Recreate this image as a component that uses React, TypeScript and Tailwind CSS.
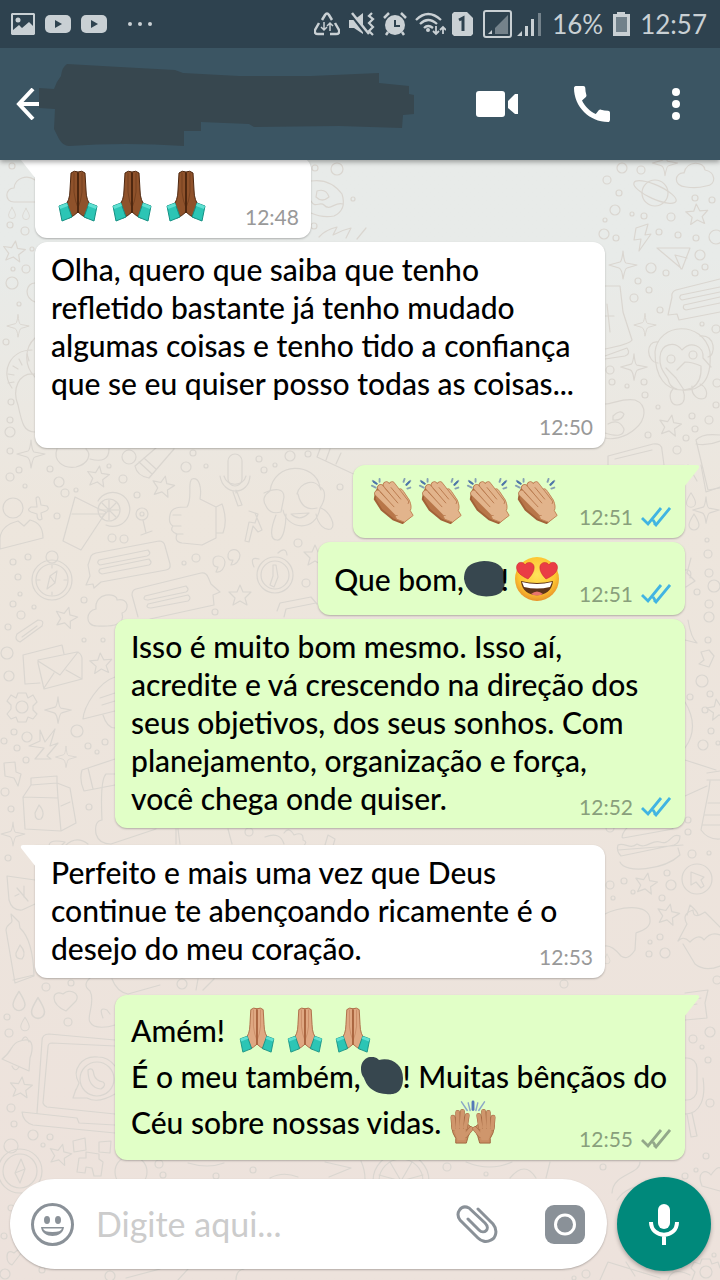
import type { ReactNode } from 'react'

type Spot = [number, number, number]

const circles: Spot[] = [
  // top left
  [12, 166, 3], [10, 225, 3], [25, 231, 4], [32, 249, 2], [13, 269, 2], [26, 269, 4], [12, 283, 6], [19, 304, 2],
  [6, 342, 3], [11, 402, 3], [10, 420, 3], [10, 432, 5], [10, 451, 3], [19, 470, 3], [10, 477, 4], [50, 469, 3],
  [59, 482, 5], [25, 486, 2], [129, 457, 7], [109, 466, 2], [123, 479, 4], [193, 453, 3], [186, 467, 5],
  [206, 466, 2], [259, 459, 3], [264, 470, 3], [275, 465, 2], [290, 456, 5], [308, 454, 3], [340, 487, 3],
  // left column
  [65, 493, 4], [76, 490, 2], [137, 495, 3], [57, 516, 3], [112, 538, 4], [124, 539, 4], [298, 543, 4],
  [13, 562, 3], [28, 557, 3], [18, 577, 3], [20, 594, 2], [184, 563, 2], [196, 558, 4], [306, 583, 4],
  [13, 604, 3], [34, 607, 2], [21, 615, 4], [84, 600, 3], [8, 627, 3], [84, 640, 2], [103, 640, 2], [215, 612, 3],
  [7, 653, 6], [9, 676, 5], [77, 731, 6], [14, 732, 3], [27, 737, 5], [4, 741, 3], [17, 748, 3], [88, 746, 3],
  [105, 742, 3], [26, 760, 3], [97, 752, 2], [5, 792, 4], [11, 809, 3], [89, 807, 3], [249, 832, 4],
  [8, 858, 3], [46, 987, 4], [71, 983, 3], [182, 984, 5], [7, 1017, 3], [9, 1033, 4], [68, 1022, 4],
  [11, 1108, 4], [14, 1124, 3], [33, 1135, 5], [50, 1137, 3], [43, 1145, 2], [159, 1164, 4], [163, 1175, 3],
  [216, 1176, 3], [253, 1170, 3], [11, 1208, 3], [4, 1236, 3], [5, 1274, 5], [42, 1270, 3], [110, 1276, 5],
  // top right
  [315, 168, 3], [337, 169, 6], [353, 199, 2], [314, 226, 3], [622, 168, 5], [641, 170, 4], [607, 180, 4],
  [619, 193, 3], [615, 210, 5], [632, 214, 2], [644, 216, 3], [671, 217, 4], [695, 198, 3], [712, 200, 3],
  [605, 220, 2], [604, 234, 5], [616, 238, 3], [659, 232, 3], [678, 235, 3], [696, 238, 3], [716, 237, 7],
  [651, 268, 5], [666, 273, 3], [700, 255, 5], [695, 273, 3], [705, 267, 3], [638, 281, 3], [649, 290, 3],
  [634, 298, 4], [660, 310, 3], [702, 324, 2], [716, 329, 4], [610, 370, 4], [612, 382, 3], [627, 386, 2],
  [644, 382, 3], [645, 395, 3], [658, 407, 2], [717, 383, 4], [716, 405, 3], [692, 416, 3], [709, 420, 4],
  [695, 429, 3], [648, 435, 3], [686, 438, 3], [677, 450, 4],
  // right column
  [707, 540, 2], [708, 554, 4], [709, 573, 4], [697, 592, 3], [714, 586, 6], [709, 604, 4], [709, 617, 5],
  [708, 640, 3], [702, 681, 6], [710, 694, 3], [690, 697, 3], [705, 710, 3], [711, 731, 3], [703, 745, 5],
  [718, 743, 2], [612, 819, 3], [610, 828, 4], [688, 820, 3], [688, 832, 3], [692, 854, 4], [709, 853, 2],
  [667, 873, 3], [671, 885, 5], [624, 881, 3], [613, 898, 2], [633, 892, 2], [662, 898, 3], [610, 885, 4],
  [660, 937, 3], [650, 942, 2], [649, 954, 3], [665, 953, 5], [590, 955, 5], [557, 955, 4], [717, 980, 4],
  [710, 1032, 5], [693, 1039, 4], [702, 1047, 2], [708, 1060, 3], [710, 1103, 4], [447, 1167, 4],
  [486, 1174, 2], [603, 1167, 3], [706, 1156, 3], [685, 1176, 3], [696, 1170, 2], [714, 1255, 2],
  [564, 984, 4], [586, 1274, 4], [574, 1278, 2],
]

// x, y, rotation
const stars: Spot[] = [
  [14, 252, 8], [98, 477, 8], [163, 487, 12], [697, 215, -4], [670, 426, 10], [240, 596, 0], [66, 618, 15],
  [101, 664, -4], [21, 1088, 6], [60, 1155, 14], [646, 884, 10], [668, 915, 12], [315, 556, 0], [718, 710, -10],
]

// x, y, scale in percent
const sparkles: Spot[] = [
  [18, 326, 80], [31, 454, 100], [58, 710, 95], [66, 757, 75], [13, 834, 85], [623, 265, 100],
  [645, 325, 80], [634, 367, 95], [665, 163, 90], [706, 510, 95],
]

// x, y, scale in percent
const drops: Spot[] = [
  [12, 213, 70], [26, 214, 70], [19, 1001, 120], [38, 1008, 130], [25, 1024, 85], [691, 500, 90],
  [694, 522, 100], [607, 959, 60],
]

function Doodles() {
  return (
    <svg
      aria-hidden="true"
      viewBox="0 0 720 1280"
      preserveAspectRatio="xMidYMin slice"
      className="absolute inset-0 h-full w-full text-[#dad6d0]"
      fill="none"
      stroke="currentColor"
      strokeWidth="1.2"
      strokeLinejoin="round"
      strokeLinecap="round"
    >
      {circles.map(([x, y, r]) => (
        <circle key={`${x}-${y}`} cx={x} cy={y} r={r} />
      ))}
      {stars.map(([x, y, a]) => (
        <path
          key={`${x}-${y}`}
          transform={`translate(${x} ${y}) rotate(${a})`}
          d="M0-11 3-4 11-4 5 2 7 9 0 5-7 9-5 2-11-4-3-4Z"
        />
      ))}
      {sparkles.map(([x, y, s]) => (
        <path
          key={`${x}-${y}`}
          transform={`translate(${x} ${y}) scale(${s / 100})`}
          d="M0-14Q1-3 3-2L14 0 4 3Q2 3 0 14-1 4-4 3L-14 0-3-3Q-1-4 0-14Z"
        />
      ))}
      {drops.map(([x, y, s]) => (
        <path
          key={`${x}-${y}`}
          transform={`translate(${x} ${y}) scale(${s / 100})`}
          d="M0-8Q5 0 5 3A5 5 0 0 1-5 3Q-5 0 0-8Z"
        />
      ))}

      {/* cloud, shell and donut beside the first bubbles */}
      <path d="M35 202H14C4 202 5 188 14 188 15 178 27 174 35 180M35 283C26 283 23 297 35 302M35 338C24 348 24 366 35 377M32 350C10 350 0 372 12 388M35 374C18 372 12 390 18 405 22 424 24 432 35 432" />
      <path d="M27 354 29 361M19 359 22 365M13 366 18 369M8 374 14 375M8 383 14 382" />
      <path d="M311 181Q330 178 342 194 347 210 334 216 322 218 311 213M317 191Q326 188 329 197 322 203 316 197ZM311 201C315 209 320 201 324 205 330 212 335 201 343 204" />
      <path d="M319 237Q325 230 337 227L333 235Q342 230 351 228L346 238M357 239 366 228" />

      {/* planet, cloud, bolt and paper plane */}
      <circle cx="655" cy="193" r="13" />
      <ellipse cx="655" cy="192" rx="23" ry="7" transform="rotate(24 655 192)" />
      <path d="M686 187C672 186 675 172 684 173 687 160 704 161 705 170 716 172 717 185 706 186 699 188 692 188 686 187Z" />
      <path d="M636 228 648 224 645 235 651 234 639 251 641 239 634 240ZM657 248H690L682 269ZM681 269 675 255 687 258" />
      <path d="M720 279 676 290Q671 292 672 297L668 315 677 314 679 320 720 312M720 287 681 295Q678 298 682 300L720 292M720 297 684 305Q682 309 686 310L720 303" />
      <path d="M605 286H620L623 312 632 340Q630 344 605 349M605 356 627 348Q631 354 625 356L605 359M607 304 610 332M605 316H614" />

      {/* monkey */}
      <path d="M655 352C658 322 703 320 710 352 712 382 700 391 682 390 666 390 655 378 655 352Z" />
      <path d="M658 342C645 340 646 362 658 363M700 336C716 334 716 356 708 357M660 357C661 343 675 341 682 350 691 340 704 346 703 358L711 367M660 357C659 369 665 373 668 379Q670 388 677 389M677 370 685 362Q692 362 701 366 702 382 692 388L684 390 676 378 666 368" />
      <path d="M673 389C668 394 670 405 677 405 686 405 685 395 683 390M692 386C691 396 699 401 705 398 709 393 705 386 700 384" />
      <circle cx="671" cy="359" r="4" />
      <circle cx="693" cy="355" r="4" />
      <path d="M605 404C613 404 622 398 635 400 648 405 646 420 635 429 625 438 612 440 605 438M608 424Q619 418 624 429 624 439 605 433M613 416Q620 409 624 414 622 421 613 420Z" />
      <path d="M608 465V456L653 444Q662 443 662 450L664 465M615 459 652 450M696 440 708 490 720 488M696 440Q702 433 720 435M696 444Q708 446 720 441M688 465 697 481" />

      {/* pencil, feather and cup over the outgoing bubbles */}
      <path d="M57 449C53 460 62 469 76 467 88 464 92 455 86 449M90 459Q109 464 109 449M135 466 157 447M149 478 174 449M135 466Q137 476 149 478M139 462 152 474M144 458 156 469" />
      <path d="M320 449 317 457 360 477M326 460 330 449M336 464 341 453" />
      <rect x="228" y="454" width="14" height="32" rx="7" />
      <path d="M220 476C223 496 249 496 250 476M224 476C227 487 243 487 246 476M236 493V490M237 492 242 505 238 506 233 492" />

      {/* person, drink and thumb */}
      <circle cx="13" cy="508" r="10" />
      <path d="M0 549V538C1 528 10 523 18 521L24 526 30 520C39 522 43 529 43 538ZM36 498Q39 495 40 500L41 505 47 506Q50 509 46 511L41 513 42 519Q37 522 37 514L31 512Q26 510 31 507L37 507Z" />
      <path d="M75 497 63 541 81 550 106 512 97 508ZM72 514H104M98 501A17 17 0 1 1 106 525" />
      <circle cx="109" cy="510" r="11" />
      <path d="M109 500V520M99 510H119M102 503 116 517M116 503 102 517" />
      <circle cx="142" cy="514" r="6" />
      <circle cx="142" cy="514" r="2" />
      <path d="M143 520 146 533M141 535 152 531M170 515C171 507 180 507 187 507 193 498 187 482 192 479 199 477 202 487 200 499L216 507V538L202 545 182 543Q174 542 177 534 169 531 173 526 168 523 170 515ZM173 515H181M173 526H181M176 534H183M216 507 222 504Q228 520 223 533L216 533M249 511 258 514 255 523 249 522 245 541 249 542 253 526 258 532 262 530 255 513Z" />
      <path d="M264 493C275 488 284 488 284 497L281 512Q270 515 266 506C262 500 264 495 270 491 274 461 315 462 320 487 327 490 325 501 320 508 316 533 287 530 283 510M297 494C300 482 316 477 321 490M298 494Q302 512 317 508M291 514Q300 522 309 513ZM276 515C270 530 270 540 277 540 284 541 286 523 286 514M316 514C318 525 325 531 331 529 336 525 330 512 321 508" />

      {/* compass, speech boxes and clock */}
      <circle cx="52" cy="580" r="20" />
      <circle cx="52" cy="580" r="16" />
      <circle cx="52" cy="557" r="6" />
      <path d="M47 589 50 576 57 571 55 583ZM50 576 55 583M52 565V568M52 592V595M37 580H40M64 580H67" />
      <path d="M88 565 91 556Q92 554 96 553L159 541Q164 541 165 546L170 564Q171 569 166 570L101 582 94 588 93 584 86 585 90 576ZM99 560 148 550Q152 554 147 556L100 565Q96 563 99 560ZM100 569 149 559Q153 563 149 565L102 574Q97 572 100 569Z" />
      <path d="M138 617 132 595Q132 590 136 589L201 573Q206 572 208 577L211 584 220 592 213 595 214 605 150 619M145 596 186 586Q190 590 186 592L148 600Q142 600 145 596ZM148 604 188 595Q192 598 188 601L151 608Q145 608 148 604Z" />
      <path d="M213 562C212 554 224 554 225 562 225 568 221 573 216 572L218 567Q213 567 213 562ZM228 557C227 548 239 547 240 555 240 560 236 565 231 565L233 560Q229 561 228 557Z" />
      <circle cx="275" cy="575" r="18" />
      <circle cx="275" cy="575" r="14" />
      <path d="M273 565V576L270 585 274 587 278 577 276 565ZM254 567Q249 556 259 559M278 553Q286 546 287 555M277 611 280 603 311 597 317 604M284 617 286 609 316 603" />
      <path d="M97 626C84 626 86 610 96 609 94 592 117 592 117 600 129 597 130 611 122 613 125 624 115 627 97 626ZM17 634 38 620Q45 620 42 626L20 642Q14 640 17 634ZM22 637 37 626" />
      <path d="M25 684 23 655 62 645 64 654M25 684 40 683M38 660 77 652Q81 653 82 658V679L44 689 38 663ZM38 661 60 675 78 652M44 688 54 673M82 679 66 670" />

      {/* gear and carton */}
      <circle cx="22" cy="707" r="6" />
      <path d="M18 693H26L28 698 33 695 37 702 33 706V710L37 714 33 719 28 717 26 722H18L16 717 11 719 7 714 11 709V705L7 701 11 695 16 698Z" />
      <path d="M115 677C99 682 84 706 83 719L115 711M100 698 115 693M102 705 115 701M103 715Q107 728 115 728M40 730 45 742 55 729 50 746 58 743 47 756 51 759H35L44 748 29 746 40 741ZM4 763 15 762 16 772 21 774 18 786 14 778 5 776Z" />
      <path d="M31 778 57 776V783L31 785ZM31 785 23 797 25 829 61 831 76 823 70 788 57 783M23 797 58 798 61 831M58 798 57 783M61 806 70 802" />
      <path d="M39 805Q46 813 41 819 35 821 35 813ZM115 759 82 770Q79 780 84 791L115 785M88 768 93 789M115 774H106Q100 780 102 820 94 821 96 834Q99 844 111 844L156 829" />
      <path d="M176 844V829M180 844 178 829M232 844 228 829M284 833Q289 826 294 835 304 831 303 840 309 842 302 847M265 837Q280 831 284 844M325 845 328 835 335 839 333 846M50 850Q45 838 65 842L57 850M65 846Q76 835 88 844" />

      {/* leaf, bottle, heart and bell */}
      <path d="M7 876 35 880M7 876 9 900Q12 911 22 910L35 904M17 888 28 901M19 894 15 896M24 897V886M6 930C7 923 12 924 12 921L11 914 19 922 20 928Q33 940 34 976L15 983ZM13 980 34 975M20 945Q27 953 22 959 15 959 16 953Z" />
      <path d="M66 1011C49 1003 52 989 63 994 69 988 81 993 76 1001ZM90 978Q82 985 90 991C96 1002 86 1018 90 1022 94 1030 109 1027 115 1025M103 1018Q98 1006 107 1010L110 1014M112 979Q117 992 128 994L160 985M198 979 196 990M203 990 214 979" />
      <path d="M2 1059C14 1051 9 1042 25 1040 34 1039 33 1050 30 1058L29 1071ZM12 1066Q15 1073 19 1067M22 1040Q26 1033 29 1042" />

      {/* laptop */}
      <path d="M115 1040 49 1034Q42 1034 42 1041L37 1113M115 1046 52 1043Q48 1043 48 1047L43 1103Q44 1106 47 1107L115 1114M22 1112 77 1118 79 1123 115 1125M22 1112Q23 1122 33 1125L115 1133" />
      <circle cx="97" cy="1079" r="17" />
      <path d="M76 1090 79 1083C71 1070 82 1055 98 1057 106 1057 112 1062 115 1066M73 1098 76 1089M73 1098 87 1098Q98 1104 115 1094M88 1070Q93 1066 94 1075 96 1081 103 1082 107 1085 101 1089 88 1088 88 1070Z" />
      <path d="M73 1141 85 1138 86 1150 74 1152ZM99 1142 111 1141 110 1153 99 1152ZM86 1152 99 1154V1159L103 1162 101 1176H94L92 1168 86 1167 85 1173 77 1172 79 1158 86 1158Z" />
      <circle cx="20" cy="1171" r="22" />
      <circle cx="20" cy="1171" r="17" />
      <circle cx="11" cy="1146" r="7" />
      <path d="M15 1173 21 1159 25 1169 20 1183ZM15 1173 25 1169" />
      <circle cx="131" cy="1172" r="16" />
      <path d="M325 1162 351 1168 329 1177M365 1179Q365 1170 361 1161M270 1178Q283 1171 298 1177M188 1163Q208 1169 224 1163M7 1257Q7 1249 14 1253 20 1247 22 1252L12 1265Q7 1263 7 1257ZM126 1278 160 1269M178 1280 188 1269M236 1280Q236 1270 244 1269" />

      {/* right side strip */}
      <path d="M685 484 694 470M701 465 706 492 720 487M685 570Q693 569 690 578M691 558 687 573 695 581 686 587M688 620Q691 638 697 643L685 640M701 652 709 650 714 656 709 667 699 664 704 660ZM685 702Q700 727 685 748M685 760 716 770M685 796 707 786M707 773 720 771M707 780H720M710 781 709 789 701 830Q708 840 720 839M708 803H720M705 815H720M702 825H720" />
      <path d="M622 837C625 818 664 811 673 829L623 838ZM618 845C625 842 630 850 637 844 646 850 652 839 660 842 670 846 671 832 680 836Q680 843 674 845L621 856Q616 851 618 845ZM618 850 683 845M620 862C625 874 664 870 680 855L678 848" />
      <circle cx="697" cy="879" r="15" />
      <path d="M691 872 704 877 701 880 704 886 701 888 696 882 691 885ZM605 914C615 908 650 901 650 920 651 928 641 931 636 933L635 950Q628 961 621 956 612 945 605 946M678 941 687 924Q681 914 693 910 693 920 705 912L720 927M678 941Q683 935 690 942 699 933 704 940 711 931 720 935M683 944 695 964Q705 972 720 966M687 915 690 905Q698 912 698 915" />
      <path d="M685 993 708 990 705 1003 707 1018 685 1020M685 1001 701 998M685 1006 697 1004" />
      <rect x="675" y="1058" width="22" height="42" rx="10" />
      <path d="M685 1114C701 1114 706 1097 703 1078M692 1113 697 1136 691 1137 687 1114M485 962Q504 940 520 964 520 967 516 970" />
      <circle cx="508" cy="960" r="5" />
      <circle cx="401" cy="1181" r="28" />
      <circle cx="401" cy="1181" r="22" />
      <path d="M401 1181 379 1175M401 1181 390 1162M401 1181 412 1162M401 1181 423 1175M466 1162Q490 1172 512 1162M510 1178Q525 1160 536 1178M546 1178 550 1162M612 1193C613 1173 640 1175 640 1162M617 1200Q630 1180 668 1186M702 1186C696 1172 706 1168 711 1175 718 1165 720 1168 720 1168M702 1186 720 1191M600 1280 608 1262 660 1278M626 1262 635 1276M668 1280Q672 1266 690 1275" />
      <circle cx="706" cy="1272" r="6" />
      <path d="M702 1259H710L712 1264 718 1262 720 1268M702 1259 700 1264 694 1262 691 1268 695 1272 692 1280" />
    </svg>
  )
}

function PrayingHands({ dark }: { dark?: boolean }) {
  const skin = dark ? '#8f522b' : '#dfa882'
  const shade = dark ? '#4f2810' : '#a9643f'
  const half = (
    <>
      <path d="M17 3Q20 0 24 2V42Q20 46 15 48L10 37Q16 31 16 20Z" fill={skin} stroke={shade} strokeWidth="1" />
      <path d="M20 3V22Q21 31 24 38" fill="none" stroke={shade} strokeWidth="1" opacity=".4" />
      <path d="M5 36 13 33 18 47 8 51Z" fill="#2cc5b5" stroke="#149083" strokeWidth="1" />
      <path d="M5 36 13 33 14 36 6 39Z" fill="#5fe0d2" />
    </>
  )
  return (
    <svg
      role="img"
      aria-label="mãos em oração"
      viewBox="0 0 48 52"
      className={dark ? 'h-[52px] w-[54px]' : 'h-[46px] w-12'}
    >
      {half}
      <g transform="matrix(-1 0 0 1 48 0)">{half}</g>
      <path d="M24 3V43" stroke={shade} strokeWidth="2" />
    </svg>
  )
}

function ClappingHands() {
  return (
    <svg role="img" aria-label="palmas" viewBox="0 0 48 50" className="h-12 w-12" strokeLinecap="round">
      <path d="M2 8 6 10M3 3 7 6M10 1V4M35 4 36 1M38 7 42 3M39 11 42 10" stroke="#86a2b3" strokeWidth="2" />
      <path d="M38 7 41 4M4 4 7 6" stroke="#4c76a8" strokeWidth="2" />
      <path
        d="M5 22 6 16 9 9 17 7 33 18 39 42 34 47 24 43 12 33Z"
        fill="#b87649"
        stroke="#a26238"
        strokeWidth="2"
        strokeLinejoin="round"
      />
      <path
        d="M20 24 30 24 29 13Q32 9 35 14L41 23Q44 30 42 34L45 39 36 46 28 43Z"
        fill="#e2b48c"
        stroke="#c08455"
        strokeWidth="1"
      />
      <path d="M8 16 28 36M11 10 30 31M17 7 34 28M23 7 37 25" stroke="#b97a4e" strokeWidth="7" />
      <path d="M8 16 28 36M11 10 30 31M17 7 34 28M23 7 37 25" stroke="#e2b48c" strokeWidth="5.5" />
      <path d="M22 30 30 22 40 27 40 40 31 42Z" fill="#e2b48c" />
      <path d="M11 15 25 30M16 11 29 26M22 10 32 22" stroke="#b97a4e" strokeWidth="1" />
    </svg>
  )
}

function RaisedHands() {
  const hand = (
    <>
      <path d="M2 28 18 26 23 30 19 39 17 46H6V41Q2 36 2 28Z" fill="#c98d62" stroke="#a26640" strokeWidth="1" />
      <path d="M4 31 3 19M8 30V14M12 30 13 13M16 30 18 17M16 38 22 31" stroke="#a26640" strokeWidth="5" />
      <path d="M4 31 3 19M8 30V14M12 30 13 13M16 30 18 17M16 38 22 31" stroke="#cf966c" strokeWidth="4" />
      <path d="M4 31H16L17 38 15 43H8Z" fill="#cf966c" />
    </>
  )
  return (
    <svg role="img" aria-label="mãos levantadas" viewBox="0 0 48 48" className="h-[46px] w-12" strokeLinecap="round">
      <path d="M19 4 21 12M29 4 27 12M12 3 18 12M36 3 30 12" stroke="#8ba7c6" strokeWidth="1.5" />
      <path d="M24 3V11" stroke="#5478b8" strokeWidth="3" />
      {hand}
      <g transform="matrix(-1 0 0 1 48 0)">{hand}</g>
    </svg>
  )
}

function HeartEyes() {
  return (
    <svg role="img" aria-label="apaixonado" viewBox="0 0 48 48" className="h-12 w-12">
      <defs>
        <radialGradient id="face" cx=".5" cy=".4" r=".6">
          <stop offset="0" stopColor="#ffe45c" />
          <stop offset=".7" stopColor="#fdc42f" />
          <stop offset="1" stopColor="#e8912a" />
        </radialGradient>
      </defs>
      <circle cx="24" cy="24" r="22" fill="url(#face)" />
      <path d="M8 26Q24 30 40 26C39 45 9 45 8 26Z" fill="#5e3418" />
      <path d="M9 27Q24 31 39 27L37 32Q24 35 11 32Z" fill="#fff" />
      <path d="M18 39Q24 34 30 39 24 42 18 39Z" fill="#e8746c" />
      <g fill="#ea3d45" stroke="#c9212e" strokeWidth=".5">
        <path d="M15 24C6 20 2 15 4 10 6 6 11 7 12 10 14 6 20 7 21 11 22 16 18 21 15 24Z" />
        <path d="M33 24C42 20 46 15 44 10 42 6 37 7 36 10 34 6 28 7 27 11 26 16 30 21 33 24Z" />
      </g>
    </svg>
  )
}

function Ticks({ read }: { read?: boolean }) {
  return (
    <svg
      role="img"
      aria-label={read ? 'lida' : 'entregue'}
      viewBox="0 0 30 20"
      className={`h-5 w-[30px] ${read ? 'text-[#41b4e2]' : 'text-[#93a88a]'}`}
      fill="none"
      stroke="currentColor"
      strokeWidth="2.8"
    >
      <path d="M1 11 7 17 20 1M13 16 15 18 29 1M12 13 14 16" />
    </svg>
  )
}

function Stamp({ time, status }: { time: string; status?: 'read' | 'sent' }) {
  return (
    <span className="flex shrink-0 items-center gap-2">
      <time className={`text-[21px] leading-5 ${status ? 'text-[#899f7c]' : 'text-[#999]'}`}>{time}</time>
      {status && <Ticks read={status === 'read'} />}
    </span>
  )
}

interface BubbleProps {
  mine?: boolean
  tail?: boolean
  className: string
  children: ReactNode
}

function Bubble({ mine, tail, className, children }: BubbleProps) {
  return (
    <li
      className={`relative max-w-[570px] rounded-xl pb-[11px] pl-4 shadow-[0_1px_2px_rgba(0,0,0,0.25)] ${
        mine ? 'self-end bg-[#e1ffc7] pr-[14px]' : 'self-start bg-white pr-3'
      } ${className}`}
    >
      {tail && (
        <svg
          aria-hidden="true"
          viewBox="0 0 16 22"
          className={`absolute top-0 h-[22px] w-4 ${
            mine ? '-right-[15px] -scale-x-100 text-[#e1ffc7]' : '-left-[15px] text-white'
          }`}
        >
          <path d="M24 0H3Q0 0 1 3L16 22H24Z" fill="currentColor" />
        </svg>
      )}
      {children}
    </li>
  )
}

function StatusBar() {
  return (
    <div className="flex h-12 items-center bg-[#2e424f] pr-[13px] pl-[11px] text-[26px] leading-8 text-[#c9d0d4]">
      <div className="flex items-center gap-[10px]" aria-hidden="true">
        <svg viewBox="0 0 24 22" className="h-[22px] w-6" fill="currentColor">
          <path fillRule="evenodd" d="M1 0H23L24 1V21L23 22H1L0 21V1ZM2 2V17L8 12 11 15 18 9 22 13V2Z" />
          <circle cx="7" cy="7" r="2.5" />
        </svg>
        {[0, 1].map((i) => (
          <svg key={i} viewBox="0 0 26 18" className="h-[18px] w-[26px]">
            <rect width="26" height="18" rx="5" fill="currentColor" />
            <path d="M10 5 17 9 10 13Z" fill="#2e424f" />
          </svg>
        ))}
        <svg viewBox="0 0 46 4" className="h-1 w-[46px]" fill="currentColor">
          <circle cx="13" cy="2" r="2" />
          <circle cx="23" cy="2" r="2" />
          <circle cx="33" cy="2" r="2" />
        </svg>
      </div>

      <div className="ml-auto flex items-center gap-[10px]">
        <div className="flex items-center gap-2" aria-hidden="true">
          <svg viewBox="0 0 26 24" className="h-6 w-[26px]" fill="none" stroke="currentColor" strokeWidth="2.5">
            <path d="M8 8 11 3Q13 0 15 3L18 8M5 11 1 18Q0 22 4 22H10M21 11 25 18Q26 22 22 22H16" />
            <path d="M10 10V18M7 15 10 18 13 15M16 19V11M13 14 16 11 19 14" strokeWidth="1.5" />
          </svg>
          <svg viewBox="0 0 27 24" className="h-6 w-[27px]" fill="none" stroke="currentColor">
            <path d="M1 8H6L15 1V22L6 16H1Z" fill="currentColor" stroke="none" />
            <path d="M2 1 19 23" stroke="#2e424f" strokeWidth="3" />
            <path d="M4 1 21 22" strokeWidth="2.5" />
            <path d="M24 1 21 4 25 7 21 11 25 15 21 19 25 23" strokeWidth="2.2" />
          </svg>
          <svg viewBox="0 0 24 24" className="h-6 w-6" fill="none" stroke="currentColor" strokeWidth="2.5">
            <circle cx="12" cy="13" r="10" fill="currentColor" stroke="none" />
            <path d="M1 6 6 1M18 1 23 6M5 20 3 23M19 20 21 23" />
            <path d="M12 8V14H17" stroke="#2e424f" strokeWidth="2" />
          </svg>
          <svg viewBox="0 0 31 24" className="h-6 w-[31px]" fill="none" stroke="currentColor" strokeWidth="2.3">
            <path d="M1 8Q13-4 26 8M5 12Q13 4 22 12M9 16Q13 12 18 16" />
            <circle cx="13" cy="18" r="2" fill="currentColor" stroke="none" />
            <path d="M21 14V22M18 19 21 22 24 19M28 22V15M25 18 28 15 31 18" strokeWidth="1.8" />
          </svg>
        </div>
        <svg viewBox="0 0 21 24" className="-ml-1 h-6 w-[21px]" aria-hidden="true">
          <path d="M2 0H15L21 6V22L19 24H2L0 22V2Z" fill="currentColor" />
          <path d="M7 8 11 6V19" fill="none" stroke="#2e424f" strokeWidth="3" />
        </svg>
        <svg viewBox="0 0 59 28" className="h-7 w-[59px]" fill="currentColor" aria-hidden="true">
          <rect x="1" y="1" width="27" height="26" rx="2" fill="none" stroke="currentColor" strokeWidth="2" />
          <path d="M12 24V18L25 5V24Z" opacity=".45" />
          <path d="M5 24 9 20V24ZM34 26 39 21V26ZM42 16H45V26H42ZM48 9H51V26H48Z" />
          <path d="M55 3H58V26H55Z" opacity=".45" />
        </svg>
        <span>16%</span>
        <svg viewBox="0 0 17 24" className="h-6 w-[17px]" aria-hidden="true">
          <path d="M4 0H12V2H17V24H0V2H4Z" fill="currentColor" />
          <rect x="3" y="5" width="11" height="15" fill="#71818b" />
        </svg>
        <time>12:57</time>
      </div>
    </div>
  )
}

function TopBar() {
  return (
    <div className="flex h-28 items-center bg-[#3b5563] pr-[34px] pl-4 text-white">
      <button type="button" aria-label="Voltar" className="shrink-0">
        <svg viewBox="0 0 23 32" className="h-8 w-[23px]" fill="none" stroke="currentColor" strokeWidth="4">
          <path d="M17 1 3 16 17 31M2 16H23" />
        </svg>
      </button>
      <svg viewBox="0 0 376 84" className="h-[84px] w-[376px] shrink" aria-hidden="true">
        <path
          d="M0 26 15 27Q17 20 22 14 23 5 28 2L81 5 136 8 144 11 200 14H272L340 11V21L370 24V32L375 33V52L364 53 363 66 300 64 215 65 210 62 162 60V69H145V84Q85 80 30 84 24 84 20 77L15 67 16 47 0 46Z"
          fill="#37474f"
        />
      </svg>
      <nav className="ml-auto flex items-center gap-14">
        <button type="button" aria-label="Chamada de vídeo">
          <svg viewBox="0 0 42 26" className="h-[26px] w-[42px]" fill="currentColor">
            <rect width="29" height="26" rx="3" />
            <path d="M32 10 39 3H42V23H39L32 17Z" />
          </svg>
        </button>
        <button type="button" aria-label="Chamada de voz">
          <svg viewBox="3 3 18 18" className="h-9 w-9" fill="currentColor">
            <path d="M20.010 15.380c-1.230 0-2.420-.2-3.530-.56-.35-.12-.74-.03-1.010.24l-1.570 1.970c-2.830-1.350-5.480-3.900-6.890-6.830l1.950-1.660c.27-.28.35-.67.24-1.020-.37-1.110-.56-2.300-.56-3.530 0-.54-.45-.99-.99-.99H4.190C3.650 3 3 3.240 3 3.990 3 13.280 10.730 21 20.010 21c.71 0 .99-.63.99-1.180v-3.450c0-.54-.45-.99-.99-.99z" />
          </svg>
        </button>
        <button type="button" aria-label="Mais opções">
          <svg viewBox="0 0 20 32" className="h-8 w-5" fill="currentColor">
            <circle cx="10" cy="4" r="4" />
            <circle cx="10" cy="16" r="4" />
            <circle cx="10" cy="28" r="4" />
          </svg>
        </button>
      </nav>
    </div>
  )
}

function Composer() {
  return (
    <form className="flex items-center gap-[10px] pt-[17px] pr-[9px] pb-[9px] pl-[10px]">
      <div className="flex h-[90px] min-w-0 flex-1 items-center rounded-full bg-white pr-[22px] pl-[21px] text-[#8a9198] shadow-[0_1px_2px_rgba(0,0,0,0.25)]">
        <button type="button" aria-label="Emoji" className="shrink-0">
          <svg viewBox="0 0 43 43" className="h-[43px] w-[43px]" fill="currentColor">
            <circle cx="21.5" cy="21.5" r="20" fill="none" stroke="currentColor" strokeWidth="3" />
            <ellipse cx="16" cy="17" rx="3" ry="4" />
            <ellipse cx="27" cy="17" rx="3" ry="4" />
            <path fillRule="evenodd" d="M10 24H33C32 36 11 36 10 24ZM12 25.5Q13 29 21.5 29 30 29 31 25.5Z" />
          </svg>
        </button>
        <input
          type="text"
          aria-label="Mensagem"
          placeholder="Digite aqui..."
          className="ml-[22px] w-0 min-w-0 flex-1 bg-transparent text-[34px] leading-10 text-black outline-none placeholder:text-[#ccc]"
        />
        <button type="button" aria-label="Anexar" className="mr-[47px] shrink-0">
          <svg viewBox="0 0 42 38" className="h-[38px] w-[42px]" fill="none" stroke="currentColor" strokeWidth="3" strokeLinecap="round">
            <path d="M22 4 37 19C42 25 40 33 35 35 30 38 25 36 22 33L4 15C-1 8 5-1 13 3L29 18C35 24 28 30 23 25L12 14" />
          </svg>
        </button>
        <button type="button" aria-label="Câmera" className="shrink-0">
          <svg viewBox="0 0 40 39" className="h-[39px] w-10">
            <rect width="40" height="39" rx="9" fill="currentColor" />
            <circle cx="20" cy="19.5" r="9.5" fill="none" stroke="#fff" strokeWidth="3" />
          </svg>
        </button>
      </div>
      <button
        type="button"
        aria-label="Gravar áudio"
        className="flex h-[94px] w-[94px] shrink-0 items-center justify-center rounded-full bg-[#00897b] text-white shadow-[0_2px_4px_rgba(0,0,0,0.3)]"
      >
        <svg viewBox="0 0 30 41" className="h-[41px] w-[30px]" fill="none" stroke="currentColor" strokeWidth="4">
          <rect x="9" width="12" height="25" rx="6" fill="currentColor" stroke="none" />
          <path d="M2 18C2 35 28 35 28 18M15 31V41" />
        </svg>
      </button>
    </form>
  )
}

export default function App() {
  return (
    <div className="relative flex h-screen flex-col overflow-hidden bg-linear-to-b from-[#e8ebe9] from-20% via-[#ede6dd] via-40% to-[#ede2dc] font-['Lato','Open_Sans',sans-serif] text-black">
      <Doodles />
      <header className="relative z-10 shrink-0 shadow-[0_2px_5px_rgba(0,0,0,0.35)]">
        <StatusBar />
        <TopBar />
      </header>

      <main className="relative flex min-h-0 flex-1 flex-col justify-end px-[35px]">
        <ul className="flex flex-col gap-1 text-[30px] leading-[38px]">
          <Bubble tail className="flex items-end gap-8 rounded-tl-none pt-2">
            <span className="flex h-[62px] items-center">
              <PrayingHands dark />
              <PrayingHands dark />
              <PrayingHands dark />
            </span>
            <Stamp time="12:48" />
          </Bubble>
          <Bubble className="mb-[13px] w-full pt-2">
            <p className="font-medium">
              Olha, quero que saiba que tenho
              <br />
              refletido bastante já tenho mudado
              <br />
              algumas coisas e tenho tido a confiança
              <br />
              que se eu quiser posso todas as coisas...
            </p>
            <div className="flex justify-end pt-[15px]">
              <Stamp time="12:50" />
            </div>
          </Bubble>

          <Bubble mine tail className="flex items-end gap-[18px] rounded-tr-none pt-[11px]">
            <span className="flex h-[51px] items-center">
              <ClappingHands />
              <ClappingHands />
              <ClappingHands />
              <ClappingHands />
            </span>
            <Stamp time="12:51" status="read" />
          </Bubble>
          <Bubble mine className="flex items-end gap-[18px] pt-[11px]">
            <span className="flex h-[51px] items-center font-medium">
              Que bom,
              <svg viewBox="0 0 41 36" className="-mr-1 h-9 w-[41px]" aria-hidden="true">
                <path d="M0 18C0 5 8 1 20 0 33 0 38 5 41 13 41 26 41 33 28 35 12 37 2 31 0 18Z" fill="#37474f" />
              </svg>
              <span className="mr-1">!</span>
              <HeartEyes />
            </span>
            <Stamp time="12:51" status="read" />
          </Bubble>
          <Bubble mine className="mb-[13px] w-full pt-2">
            <p className="font-medium">
              Isso é muito bom mesmo. Isso aí,
              <br />
              acredite e vá crescendo na direção dos
              <br />
              seus objetivos, dos seus sonhos. Com
              <br />
              planejamento, organização e força,
              <br />
              você chega onde quiser.
            </p>
            <div className="-mt-5 flex justify-end">
              <Stamp time="12:52" status="read" />
            </div>
          </Bubble>

          <Bubble tail className="mb-[13px] w-full rounded-tl-none pt-2">
            <p className="font-medium">
              Perfeito e mais uma vez que Deus
              <br />
              continue te abençoando ricamente é o
              <br />
              desejo do meu coração.
            </p>
            <div className="-mt-5 flex justify-end">
              <Stamp time="12:53" />
            </div>
          </Bubble>

          <Bubble mine tail className="w-full rounded-tr-none pt-3">
            <p className="leading-[46px] font-medium">
              <span className="flex items-center">
                <span className="mr-2">Amém!</span>
                <PrayingHands />
                <PrayingHands />
                <PrayingHands />
              </span>
              <span className="flex items-center">
                É o meu também,
                <svg viewBox="0 0 42 38" className="h-[38px] w-[42px]" aria-hidden="true">
                  <path d="M0 10C2-2 14-2 18 3 31 0 42 8 42 21 42 37 32 38 25 37 10 36 5 27 3 21 0 17 0 14 0 10Z" fill="#37474f" />
                </svg>
                ! Muitas bênçãos do
              </span>
              <span className="flex items-center">
                <span className="mr-2">Céu sobre nossas vidas.</span>
                <RaisedHands />
              </span>
            </p>
            <div className="-mt-4 flex justify-end">
              <Stamp time="12:55" status="sent" />
            </div>
          </Bubble>
        </ul>
      </main>

      <footer className="relative shrink-0">
        <Composer />
      </footer>
    </div>
  )
}
